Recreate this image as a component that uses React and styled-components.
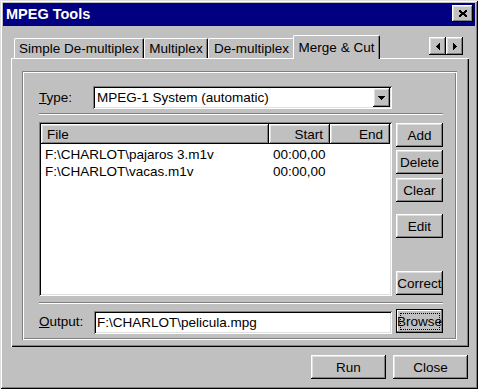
import React from 'react';
import styled, { createGlobalStyle, css } from 'styled-components';

const Global = createGlobalStyle`
  html, body { margin: 0; padding: 0; background: #c0c0c0; }
  body {
    font-family: "Liberation Sans", Arial, sans-serif;
    font-size: 13.5px;
    color: #000;
  }
  * { box-sizing: border-box; }
`;

const raised = css`
  box-shadow: inset -1px -1px #000, inset 1px 1px #fff, inset -2px -2px #808080, inset 2px 2px #dfdfdf;
`;

const sunken = css`
  box-shadow: inset 1px 1px #808080, inset -1px -1px #fff, inset 2px 2px #000, inset -2px -2px #dfdfdf;
`;

const Window = styled.div`
  width: 478px;
  height: 389px;
  background: #c0c0c0;
  padding: 3px;
  display: flex;
  flex-direction: column;
  box-shadow: inset 1px 1px #dfdfdf, inset -1px -1px #000, inset 2px 2px #fff, inset -2px -2px #808080;
`;

const TitleBar = styled.div`
  height: 23px;
  flex: none;
  background: #000080;
  color: #fff;
  display: flex;
  align-items: flex-start;
  padding: 0 2px 0 3px;
`;

const Title = styled.div`
  flex: 1;
  line-height: 23px;
  font-weight: bold;
  font-size: 14.5px;
  white-space: nowrap;
`;

const CaptionButton = styled.button`
  width: 21px;
  height: 17px;
  margin-top: 2px;
  border: 0;
  padding: 0;
  background: #c0c0c0;
  ${raised};
  display: flex;
  align-items: center;
  justify-content: center;
`;

const Body = styled.div`
  flex: 1;
  display: flex;
  flex-direction: column;
  padding: 9px 6px 7px 8px;
`;

const TabStrip = styled.div`
  height: 23px;
  flex: none;
  display: flex;
  align-items: flex-end;
  padding: 0 6px 0 3px;
`;

const Tab = styled.div`
  width: ${p => p.$w}px;
  height: ${p => (p.$selected ? 24 : 20)}px;
  margin: ${p => (p.$selected ? '0 -2px -1px' : '0')};
  position: relative;
  z-index: ${p => (p.$selected ? 1 : 0)};
  background: #c0c0c0;
  border-left: 1px solid #fff;
  border-top: 1px solid #fff;
  border-right: 1px solid #000;
  border-radius: 2px 2px 0 0;
  box-shadow: inset -1px 0 #808080;
  display: flex;
  align-items: center;
  justify-content: center;
  white-space: nowrap;
  padding-bottom: ${p => (p.$selected ? 1 : 0)}px;
`;

const ScrollArrows = styled.div`
  margin-left: auto;
  margin-bottom: 3px;
  display: flex;
`;

const ArrowButton = styled.button`
  width: 17px;
  height: 18px;
  border: 0;
  padding: 0;
  background: #c0c0c0;
  ${raised};
  display: flex;
  align-items: center;
  justify-content: center;
`;

const Panel = styled.div`
  height: 289px;
  flex: none;
  padding: 13px 12px 7px 11px;
  display: flex;
  flex-direction: column;
  box-shadow: inset 1px 1px #fff, inset -1px -1px #000, inset -2px -2px #808080;
`;

const GroupBox = styled.div`
  flex: 1;
  display: flex;
  flex-direction: column;
  padding: 15px 14px 7px 17px;
  box-shadow: inset 1px 1px #808080, inset -1px -1px #fff, inset 2px 2px #fff, inset -2px -2px #808080;
`;

const FieldRow = styled.div`
  display: flex;
  align-items: center;
  height: ${p => p.$h}px;
  margin-top: ${p => p.$mt || 0}px;
  flex: none;
`;

const Label = styled.label`
  width: ${p => p.$w}px;
  flex: none;
  white-space: nowrap;
`;

const Combo = styled.div`
  width: 299px;
  height: 23px;
  background: #fff;
  ${sunken};
  display: flex;
  align-items: center;
  padding: 2px 2px 2px 4px;
`;

const ComboText = styled.span`
  flex: 1;
  white-space: nowrap;
`;

const DropButton = styled.button`
  width: 17px;
  height: 19px;
  border: 0;
  padding: 0;
  background: #c0c0c0;
  ${raised};
  display: flex;
  align-items: center;
  justify-content: center;
`;

const Separator = styled.div`
  height: 2px;
  flex: none;
  margin-top: ${p => p.$mt}px;
  border-top: 1px solid #808080;
  border-bottom: 1px solid #fff;
`;

const Middle = styled.div`
  display: flex;
  gap: 4px;
  height: 174px;
  margin-top: 7px;
  flex: none;
`;

const ListView = styled.div`
  width: 353px;
  background: #fff;
  ${sunken};
  padding: 2px;
  display: flex;
  flex-direction: column;
`;

const HeaderRow = styled.div`
  display: flex;
  height: 20px;
  flex: none;
`;

const HeaderCell = styled.div`
  width: ${p => p.$w}px;
  background: #c0c0c0;
  ${raised};
  display: flex;
  align-items: center;
  justify-content: ${p => (p.$right ? 'flex-end' : 'flex-start')};
  padding: 0 7px 0 6px;
  white-space: nowrap;
`;

const Rows = styled.div`
  padding-top: 2px;
`;

const Row = styled.div`
  display: flex;
  height: 17px;
  align-items: center;
`;

const Cell = styled.div`
  width: ${p => p.$w}px;
  text-align: ${p => (p.$right ? 'right' : 'left')};
  padding: 0 7px 0 4px;
  white-space: nowrap;
`;

const ButtonColumn = styled.div`
  width: 47px;
  display: flex;
  flex-direction: column;
`;

const PushButton = styled.button`
  width: ${p => p.$w || 47}px;
  height: 24px;
  flex: none;
  margin-top: ${p => p.$mt || 0}px;
  border: 0;
  padding: 0;
  font: inherit;
  color: #000;
  background: #c0c0c0;
  ${p =>
    p.$focused
      ? css`box-shadow: inset 0 0 0 1px #000, inset -2px -2px #808080, inset 2px 2px #fff;`
      : raised};
  display: flex;
  align-items: center;
  justify-content: center;
`;

const FocusRing = styled.span`
  width: calc(100% - 7px);
  height: calc(100% - 7px);
  border: 1px dotted #000;
  display: flex;
  align-items: center;
  justify-content: center;
`;

const TextField = styled.div`
  width: 298px;
  height: 23px;
  margin-top: 2px;
  align-self: flex-start;
  background: #fff;
  ${sunken};
  display: flex;
  align-items: center;
  padding: 2px 3px;
  white-space: nowrap;
  margin-right: 4px;
`;

const Footer = styled.div`
  display: flex;
  justify-content: flex-end;
  gap: 7px;
  margin-top: 8px;
  padding-right: 1px;
`;

const Glyph = ({ d, w, h }) => (
  <svg width={w} height={h} viewBox={`0 0 ${w} ${h}`} shapeRendering="crispEdges">
    <path d={d} fill="#000" />
  </svg>
);

const closeX =
  'M0 0h2v1H0z M6 0h2v1H6z M0 1h3v1H0z M5 1h3v1H5z M1 2h6v1H1z M2 3h4v1H2z M1 4h6v1H1z M0 5h3v1H0z M5 5h3v1H5z M0 6h2v1H0z M6 6h2v1H6z';
const leftTri = 'M3 0h1v7H3z M2 1h1v5H2z M1 2h1v3H1z M0 3h1v1H0z';
const rightTri = 'M0 0h1v7H0z M1 1h1v5H1z M2 2h1v3H2z M3 3h1v1H3z';
const downTri = 'M0 0h7v1H0z M1 1h5v1H1z M2 2h3v1H2z M3 3h1v1H3z';

const tabs = [
  { label: 'Simple De-multiplex', w: 130 },
  { label: 'Multiplex', w: 64 },
  { label: 'De-multiplex', w: 87 },
  { label: 'Merge & Cut', w: 87, selected: true },
];

const files = [
  { name: 'F:\\CHARLOT\\pajaros 3.m1v', start: '00:00,00', end: '' },
  { name: 'F:\\CHARLOT\\vacas.m1v', start: '00:00,00', end: '' },
];

const sideButtons = [
  { label: 'Add', mt: 1 },
  { label: 'Delete', mt: 3 },
  { label: 'Clear', mt: 4 },
  { label: 'Edit', mt: 12 },
  { label: 'Correct', mt: 33 },
];

export default function App() {
  return (
    <>
      <Global />
      <Window>
        <TitleBar>
          <Title>MPEG Tools</Title>
          <CaptionButton aria-label="Close">
            <Glyph d={closeX} w={8} h={7} />
          </CaptionButton>
        </TitleBar>
        <Body>
          <TabStrip>
            {tabs.map(t => (
              <Tab key={t.label} $w={t.w} $selected={t.selected}>
                {t.label}
              </Tab>
            ))}
            <ScrollArrows>
              <ArrowButton aria-label="Previous">
                <Glyph d={leftTri} w={4} h={7} />
              </ArrowButton>
              <ArrowButton aria-label="Next">
                <Glyph d={rightTri} w={4} h={7} />
              </ArrowButton>
            </ScrollArrows>
          </TabStrip>
          <Panel>
            <GroupBox>
              <FieldRow $h={23}>
                <Label $w={54}>
                  <u>T</u>ype:
                </Label>
                <Combo>
                  <ComboText>MPEG-1 System (automatic)</ComboText>
                  <DropButton aria-label="Open">
                    <Glyph d={downTri} w={7} h={4} />
                  </DropButton>
                </Combo>
              </FieldRow>
              <Separator $mt={4} />
              <Middle>
                <ListView>
                  <HeaderRow>
                    <HeaderCell $w={228}>File</HeaderCell>
                    <HeaderCell $w={61} $right>Start</HeaderCell>
                    <HeaderCell $w={60} $right>End</HeaderCell>
                  </HeaderRow>
                  <Rows>
                    {files.map(f => (
                      <Row key={f.name}>
                        <Cell $w={228}>{f.name}</Cell>
                        <Cell $w={61} $right>{f.start}</Cell>
                        <Cell $w={60} $right>{f.end}</Cell>
                      </Row>
                    ))}
                  </Rows>
                </ListView>
                <ButtonColumn>
                  {sideButtons.map(b => (
                    <PushButton key={b.label} $mt={b.mt}>
                      {b.label}
                    </PushButton>
                  ))}
                </ButtonColumn>
              </Middle>
              <Separator $mt={6} />
              <FieldRow $h={24} $mt={5}>
                <Label $w={55}>
                  <u>O</u>utput:
                </Label>
                <TextField>F:\CHARLOT\pelicula.mpg</TextField>
                <PushButton $focused>
                  <FocusRing>Browse</FocusRing>
                </PushButton>
              </FieldRow>
            </GroupBox>
          </Panel>
          <Footer>
            <PushButton $w={75}>Run</PushButton>
            <PushButton $w={75}>Close</PushButton>
          </Footer>
        </Body>
      </Window>
    </>
  );
}
